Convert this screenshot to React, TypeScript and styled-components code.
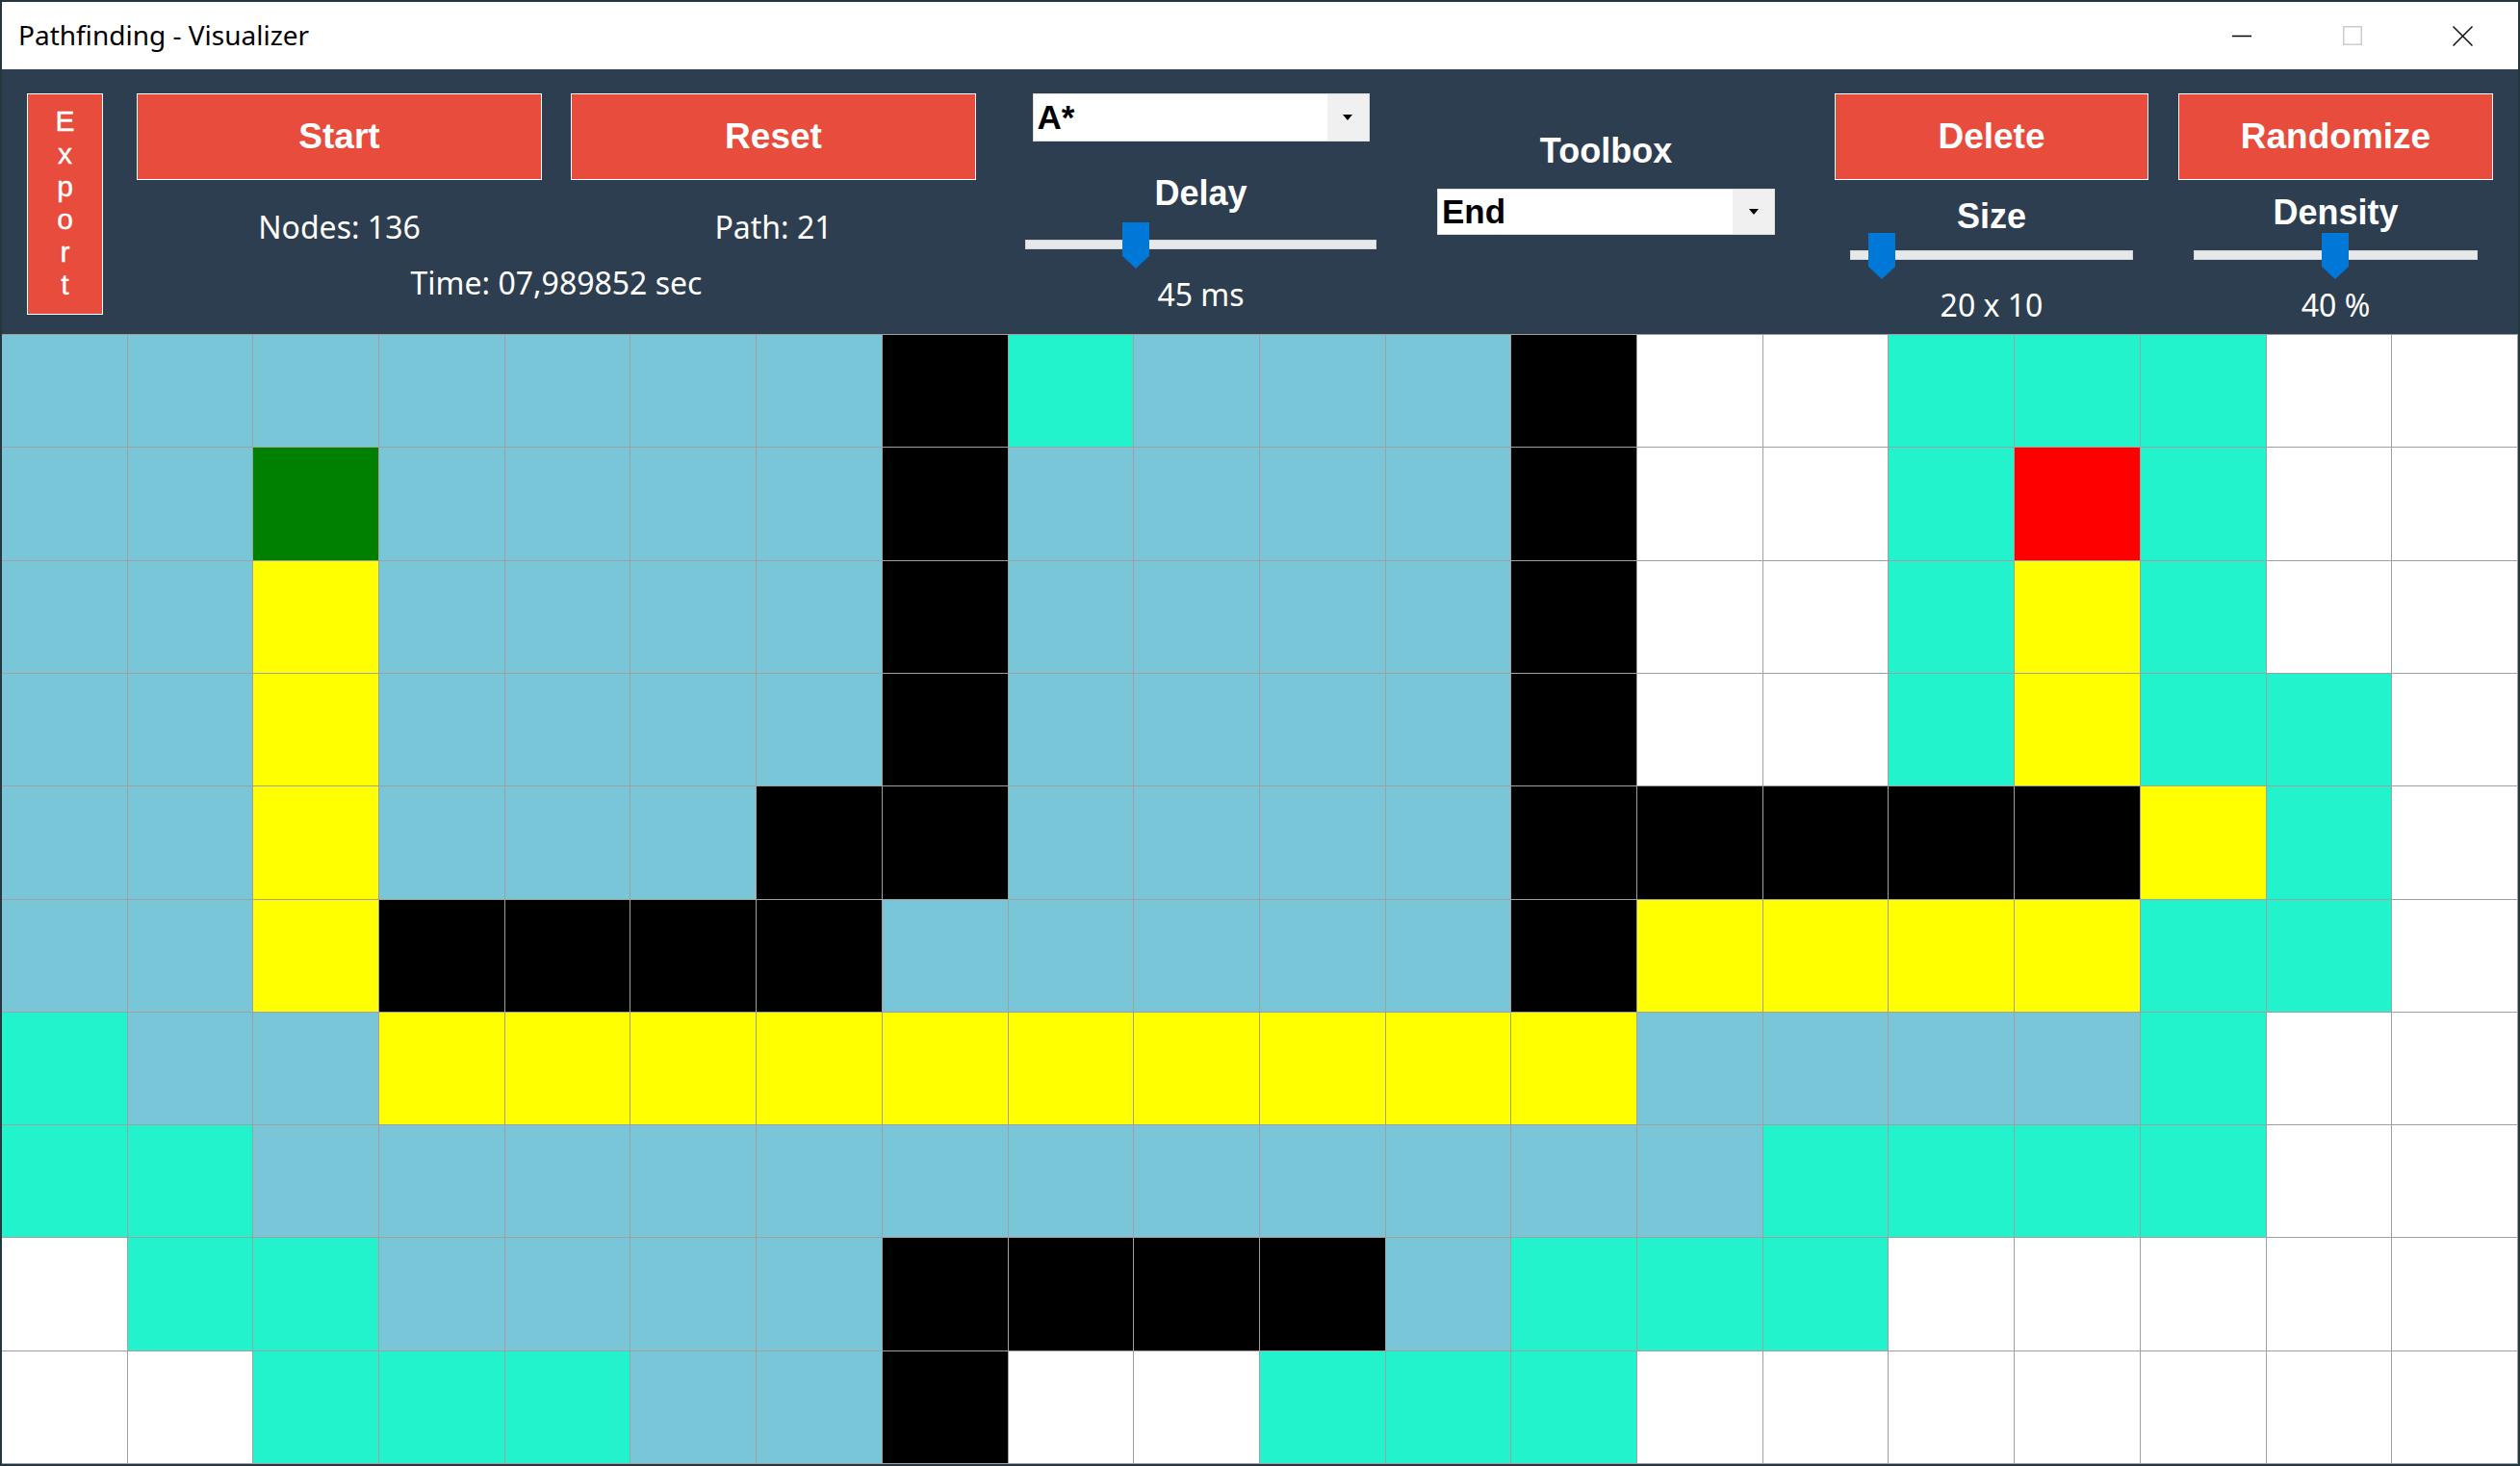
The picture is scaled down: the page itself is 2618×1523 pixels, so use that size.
import React from 'react';
import styled, { createGlobalStyle } from 'styled-components';

const GlobalStyle = createGlobalStyle`
  html, body {
    margin: 0;
    padding: 0;
    background: #23373d;
  }
  body {
    width: 2618px;
    height: 1523px;
    overflow: hidden;
  }
  * { box-sizing: border-box; }
`;

const COLORS: Record<string, string> = {
  b: '#79c6d9',
  t: '#22f3cd',
  w: '#ffffff',
  k: '#000000',
  y: '#ffff00',
  g: '#008000',
  r: '#ff0000',
};

const expand = (s: string) => s.replace(/([a-z])(\d+)/g, (_m, c: string, n: string) => c.repeat(Number(n)));

const GRID = [
  'b7k1t1b3k1w2t3w2',
  'b2g1b4k1b4k1w2t1r1t1w2',
  'b2y1b4k1b4k1w2t1y1t1w2',
  'b2y1b4k1b4k1w2t1y1t2w1',
  'b2y1b3k2b4k5y1t1w1',
  'b2y1k4b5k1y4t2w1',
  't1b2y10b4t1w2',
  't2b12t4w2',
  'w1t2b4k4b1t3w5',
  'w2t3b2k1w2t3w7',
].map(expand);

const Window = styled.div`
  margin: 2px 2px 2px 2px;
  width: 2614px;
  height: 1519px;
  display: flex;
  flex-direction: column;
  background: #ffffff;
`;

const TitleBar = styled.div`
  flex: none;
  height: 70px;
  display: flex;
  align-items: center;
  justify-content: space-between;
  padding-left: 17px;
  background: #ffffff;
`;

const Title = styled.span`
  font-family: 'Noto Sans', 'Open Sans', sans-serif;
  font-size: 28px;
  color: #000000;
  padding-bottom: 2px;
`;

const Controls = styled.div`
  display: flex;
  height: 100%;
`;

const ControlButton = styled.div`
  width: 115px;
  height: 100%;
  display: flex;
  align-items: center;
  justify-content: center;
`;

const Toolbar = styled.div`
  flex: none;
  height: 275px;
  background: #2d3e50;
  display: flex;
  align-items: flex-start;
  padding: 25px 0 0 26px;
`;

const ExportButton = styled.button`
  flex: none;
  width: 79px;
  height: 230px;
  margin: 0;
  padding: 0 0 2px 0;
  background: #e74c3c;
  border: 1px solid #ffffff;
  display: flex;
  flex-direction: column;
  align-items: center;
  justify-content: center;
  font-family: 'Liberation Sans', Arial, sans-serif;
  font-size: 30px;
  line-height: 34px;
  color: #ffffff;
  -webkit-text-stroke: 0.4px #ffffff;
`;

const Letter = styled.span`
  display: block;
`;

const Column = styled.div<{ $w: number; $ml: number }>`
  flex: none;
  width: ${(p) => p.$w}px;
  margin-left: ${(p) => p.$ml}px;
  display: flex;
  flex-direction: column;
  align-items: center;
`;

const ButtonRow = styled.div`
  display: flex;
  gap: 30px;
  width: 100%;
`;

const ActionButton = styled.button`
  flex: 1 1 0;
  height: 90px;
  margin: 0;
  padding: 0;
  background: #e74c3c;
  border: 1px solid #ffffff;
  color: #ffffff;
  font-family: 'Liberation Sans', Arial, sans-serif;
  font-weight: bold;
  font-size: 37px;
  display: flex;
  align-items: center;
  justify-content: center;
`;

const StatsRow = styled.div`
  display: grid;
  grid-template-columns: 1fr 1fr;
  column-gap: 30px;
  width: 100%;
  margin-top: 29px;
`;

const StatText = styled.div<{ $mt?: number }>`
  font-family: 'Noto Sans', 'Open Sans', sans-serif;
  font-size: 32px;
  line-height: 40px;
  color: #ffffff;
  text-align: center;
  white-space: nowrap;
  margin-top: ${(p) => p.$mt ?? 0}px;
`;

const Label = styled.div<{ $mt: number }>`
  font-family: 'Liberation Sans', Arial, sans-serif;
  font-weight: bold;
  font-size: 36px;
  line-height: 40px;
  color: #ffffff;
  text-align: center;
  white-space: nowrap;
  margin-top: ${(p) => p.$mt}px;
`;

const Combo = styled.div<{ $w: number; $h: number; $mt: number }>`
  width: ${(p) => p.$w}px;
  height: ${(p) => p.$h}px;
  margin-top: ${(p) => p.$mt}px;
  background: #ffffff;
  border: 1px solid #dedede;
  display: flex;
  align-items: stretch;
`;

const ComboText = styled.div`
  flex: 1;
  display: flex;
  align-items: center;
  padding-left: 4px;
  font-family: 'Liberation Sans', Arial, sans-serif;
  font-weight: bold;
  font-size: 35px;
  line-height: 38px;
  color: #000000;
`;

const ComboArrow = styled.div`
  flex: none;
  width: 43px;
  background: #f0f0f0;
  display: flex;
  align-items: center;
  justify-content: center;
  &::after {
    content: '';
    display: block;
    width: 0;
    height: 0;
    border-left: 5px solid transparent;
    border-right: 5px solid transparent;
    border-top: 6px solid #000000;
  }
`;

const SliderBox = styled.div<{ $mt: number; $inset: number }>`
  position: relative;
  align-self: stretch;
  margin: ${(p) => p.$mt}px ${(p) => p.$inset}px 0;
  height: 48px;
  padding-top: 18px;
`;

const Track = styled.div`
  height: 10px;
  background: #e6e8e9;
  border: 1px solid #d4d7d9;
`;

const Thumb = styled.div`
  position: absolute;
  top: 0;
  width: 28px;
  height: 48px;
  background: #0078d7;
  clip-path: polygon(0 0, 100% 0, 100% 73%, 50% 100%, 0 73%);
`;

const GridArea = styled.div`
  flex: 1;
  display: grid;
  grid-template-columns: repeat(20, 1fr);
  grid-template-rows: repeat(10, 1fr);
  gap: 1px;
  padding: 1px 1px 1px 0;
  background: #a0a0a0;
`;

const Cell = styled.div<{ $c: string }>`
  background: ${(p) => p.$c};
`;

const Slider: React.FC<{ fraction: number; mt: number; inset: number; width: number }> = ({ fraction, mt, inset, width }) => (
  <SliderBox $mt={mt} $inset={inset}>
    <Track />
    <Thumb style={{ left: Math.round(fraction * (width - 28)) }} />
  </SliderBox>
);

const MinIcon = () => (
  <svg width="20" height="20" viewBox="0 0 20 20">
    <line x1="0" y1="10.5" x2="20" y2="10.5" stroke="#000" strokeWidth="1.5" />
  </svg>
);

const MaxIcon = () => (
  <svg width="20" height="20" viewBox="0 0 20 20">
    <rect x="0.75" y="0.75" width="18.5" height="18.5" fill="none" stroke="#cccccc" strokeWidth="1.5" />
  </svg>
);

const CloseIcon = () => (
  <svg width="21" height="21" viewBox="0 0 21 21">
    <path d="M0.5 0.5 L20.5 20.5 M20.5 0.5 L0.5 20.5" stroke="#111" strokeWidth="1.5" />
  </svg>
);

export default function App() {
  return (
    <>
      <GlobalStyle />
      <Window>
        <TitleBar>
          <Title>Pathfinding - Visualizer</Title>
          <Controls>
            <ControlButton><MinIcon /></ControlButton>
            <ControlButton><MaxIcon /></ControlButton>
            <ControlButton><CloseIcon /></ControlButton>
          </Controls>
        </TitleBar>
        <Toolbar>
          <ExportButton>
            {'Export'.split('').map((l, i) => (
              <Letter key={i}>{l}</Letter>
            ))}
          </ExportButton>
          <Column $w={872} $ml={35}>
            <ButtonRow>
              <ActionButton>Start</ActionButton>
              <ActionButton>Reset</ActionButton>
            </ButtonRow>
            <StatsRow>
              <StatText>Nodes: 136</StatText>
              <StatText>Path: 21</StatText>
            </StatsRow>
            <StatText $mt={18}>Time: 07,989852 sec</StatText>
          </Column>
          <Column $w={365} $ml={51}>
            <Combo $w={350} $h={50} $mt={0}>
              <ComboText>A*</ComboText>
              <ComboArrow />
            </Combo>
            <Label $mt={34}>Delay</Label>
            <Slider fraction={45 / 150} mt={10} inset={0} width={365} />
            <StatText $mt={7}>45 ms</StatText>
          </Column>
          <Column $w={351} $ml={63}>
            <Label $mt={40}>Toolbox</Label>
            <Combo $w={351} $h={48} $mt={19}>
              <ComboText>End</ComboText>
              <ComboArrow />
            </Combo>
          </Column>
          <Column $w={326} $ml={62}>
            <ButtonRow>
              <ActionButton>Delete</ActionButton>
            </ButtonRow>
            <Label $mt={18}>Size</Label>
            <Slider fraction={(20 - 10) / 140} mt={-3} inset={16} width={294} />
            <StatText $mt={7}>20 x 10</StatText>
          </Column>
          <Column $w={327} $ml={31}>
            <ButtonRow>
              <ActionButton>Randomize</ActionButton>
            </ButtonRow>
            <Label $mt={14}>Density</Label>
            <Slider fraction={0.5} mt={1} inset={16} width={294} />
            <StatText $mt={7}>40 %</StatText>
          </Column>
        </Toolbar>
        <GridArea>
          {GRID.map((row, r) =>
            row.split('').map((c, i) => <Cell key={`${r}-${i}`} $c={COLORS[c]} />)
          )}
        </GridArea>
      </Window>
    </>
  );
}
